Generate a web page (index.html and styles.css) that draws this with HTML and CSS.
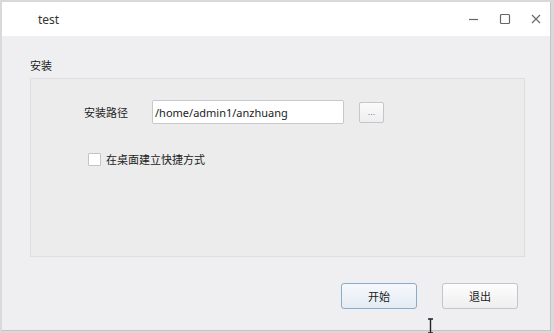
FILE: index.html
```html
<!DOCTYPE html>
<html lang="zh-CN">
  <head>
    <meta charset="UTF-8" />
    <title>test</title>
    <link rel="stylesheet" href="styles.css">
  </head>
  <body>
    <div class="window">
      <div class="titlebar">
        <span class="title">test</span>
        <div class="win-controls">
          <!-- minimize -->
          <svg width="11" height="12" viewBox="0 0 11 12">
            <path d="M1 6.5h9" stroke="#666" stroke-width="1.2" />
          </svg>
          <!-- maximize -->
          <svg width="12" height="12" viewBox="0 0 12 12">
            <rect x="1.5" y="1.5" width="9" height="9" rx="1" fill="none" stroke="#666" stroke-width="1.2" />
          </svg>
          <!-- close -->
          <svg width="10" height="12" viewBox="0 0 10 12">
            <path d="M1 2l8 8M9 2l-8 8" stroke="#666" stroke-width="1.1" />
          </svg>
        </div>
      </div>

      <div class="content">
        <div class="group-title">安装</div>
        <div class="group">
          <div class="path-row">
            <label for="installPath" class="path-label">安装路径</label>
            <input type="text" id="installPath" class="path-input" value="/home/admin1/anzhuang" />
            <button class="browse-btn">...</button>
          </div>
          <div class="check-row">
            <span class="checkbox"></span>
            <span>在桌面建立快捷方式</span>
          </div>
        </div>
        <div class="actions">
          <button class="btn btn-default">开始</button>
          <button class="btn">退出</button>
        </div>
      </div>

      <!-- text cursor caught in the capture -->
      <svg class="cursor" width="7" height="16" viewBox="0 0 7 16">
        <path d="M1 1h5M3.5 1v14M1 15h5" stroke="#222" stroke-width="1.4" fill="none" />
      </svg>
    </div>
  </body>
</html>
```

FILE: styles.css
```css
body {
  margin: 0;
  padding: 2px 3px 2px 2px;
  background: #d9d9db;
  font-family: "Noto Sans CJK SC", "Noto Sans", sans-serif;
  font-size: 11px;
  color: #222;
}
.window {
  position: relative;
  height: 328px;
  background: #efeef0;
  border-right: 1px solid #c4c4c6;
  border-bottom: 1px solid #c4c4c6;
  display: flex;
  flex-direction: column;
}
.titlebar {
  height: 34px;
  background: #fff;
  display: flex;
  align-items: center;
  justify-content: space-between;
  padding: 0 9px 0 36px;
}
.title {
  font-family: "Noto Sans", sans-serif;
  font-size: 12px;
  color: #333;
}
.win-controls {
  display: flex;
  gap: 20px;
  align-items: center;
}
.content {
  flex: 1;
  display: flex;
  flex-direction: column;
  padding: 21px 25px 0 28px;
}
.group-title {
  line-height: 16px;
  margin-bottom: 5px;
}
.group {
  box-sizing: border-box;
  height: 179px;
  border: 1px solid #dedde0;
  background: #ececed;
  padding-top: 21px;
}
.path-row {
  display: flex;
  align-items: center;
  padding-left: 53px;
}
.path-label {
  white-space: nowrap;
  width: 44px;
  margin-right: 24px;
}
.path-input {
  width: 186px;
  height: 22px;
  border: 1px solid #c8c8cc;
  border-radius: 2px;
  padding: 0 2px;
  margin: 0;
  font-family: "Noto Sans", "Noto Sans CJK SC", sans-serif;
  font-size: 11px;
  color: #222;
  background: #fff;
}
.browse-btn {
  width: 25px;
  height: 21px;
  margin-left: 15px;
  padding: 0;
  border: 1px solid #c6c6c9;
  border-radius: 2px;
  background: linear-gradient(#fbfbfb, #eeeef0);
  color: #777;
  font-size: 9px;
  line-height: 12px;
}
.check-row {
  display: flex;
  align-items: center;
  gap: 5px;
  margin-top: 27px;
  padding-left: 57px;
}
.checkbox {
  width: 11px;
  height: 11px;
  border: 1px solid #c4c4c8;
  border-radius: 1px;
  background: #fff;
}
.actions {
  display: flex;
  justify-content: flex-end;
  gap: 25px;
  margin-top: 26px;
  margin-right: 7px;
}
.btn {
  width: 76px;
  height: 26px;
  border: 1px solid #c5c5c8;
  border-radius: 3px;
  background: linear-gradient(#fdfdfd, #eeeeef);
  font-family: "Noto Sans CJK SC", sans-serif;
  font-size: 11px;
  color: #222;
  padding: 0;
}
.btn-default {
  border-color: #8aaccb;
  background: linear-gradient(#f6f9fc, #e3ebf3);
}
.cursor {
  position: absolute;
  left: 425px;
  top: 316px;
}
```
